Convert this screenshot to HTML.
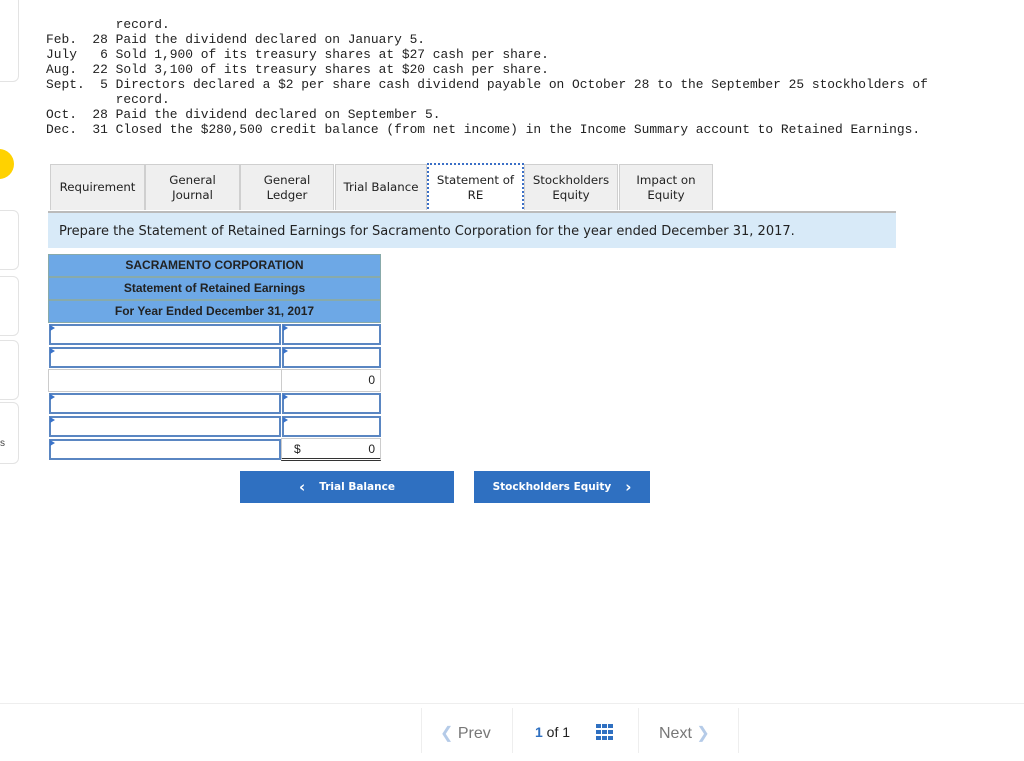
<!DOCTYPE html>
<html><head><style>
body{margin:0;width:1024px;height:761px;background:#fff;font-family:"Liberation Sans",sans-serif;position:relative;overflow:hidden;color:#222}
.card{position:absolute;left:-10px;width:27px;border:1px solid #e3e3e3;border-radius:6px;background:#fff}
pre{position:absolute;left:46px;top:17px;margin:0;font-family:"Liberation Mono",monospace;font-size:12.9px;line-height:15px;color:#222}
.clip{position:absolute;left:0;top:0;width:1024px;height:18px;background:#fff}
.tab{position:absolute;top:164px;height:45px;background:#efefef;border:1px solid #cfcfcf;border-bottom:none;font-family:"DejaVu Sans",sans-serif;font-size:11.8px;display:flex;align-items:center;justify-content:center;text-align:center;line-height:15px;color:#222}
.tab.act{background:#fff;border:2px dotted #3b6fc6;top:163px;height:46px}
.strip{position:absolute;left:48px;top:211px;width:848px;height:37px;background:#d8eaf8;border-top:2px solid #bbb;box-sizing:border-box;font-family:"DejaVu Sans",sans-serif;font-size:13px;padding:11px 0 0 11px;color:#222}
.hdr{position:absolute;left:48px;width:333px;height:23px;background:#6da8e6;border:1px solid #8aa;box-sizing:border-box;font-size:12px;font-weight:bold;text-align:center;line-height:21px;color:#222}
.in{position:absolute;height:21px;background:#fff;border:2px solid #5a86c2;box-sizing:border-box}
.in:before{content:"";position:absolute;left:-1px;top:-1px;border-left:5px solid #3a73c9;border-top:3px solid transparent;border-bottom:3px solid transparent}
.plain{position:absolute;height:23px;border:1px solid #ccc;box-sizing:border-box;font-size:12px;text-align:right;padding-right:5px;line-height:21px}
.btn{position:absolute;top:471px;height:32px;background:#2f70c1;color:#fff;font-family:"DejaVu Sans",sans-serif;font-size:10.5px;font-weight:bold;display:flex;align-items:center;justify-content:center}
</style></head><body>
<div class="card" style="top:-5px;height:85px"></div>
<div class="card" style="top:210px;height:58px"></div>
<div class="card" style="top:276px;height:58px"></div>
<div class="card" style="top:340px;height:58px"></div>
<div class="card" style="top:402px;height:60px"></div>
<div style="position:absolute;left:-16px;top:149px;width:30px;height:30px;border-radius:50%;background:#ffd200"></div>
<div style="position:absolute;left:0;top:438px;font-size:10px;color:#444">s</div>
<pre>         record.
Feb.  28 Paid the dividend declared on January 5.
July   6 Sold 1,900 of its treasury shares at $27 cash per share.
Aug.  22 Sold 3,100 of its treasury shares at $20 cash per share.
Sept.  5 Directors declared a $2 per share cash dividend payable on October 28 to the September 25 stockholders of
         record.
Oct.  28 Paid the dividend declared on September 5.
Dec.  31 Closed the $280,500 credit balance (from net income) in the Income Summary account to Retained Earnings.</pre>
<div class="clip" style="left:20px;width:1004px;height:19px"></div>
<div class="tab" style="left:50px;width:93px">Requirement</div>
<div class="tab" style="left:145px;width:93px">General<br>Journal</div>
<div class="tab" style="left:240px;width:92px">General<br>Ledger</div>
<div class="tab" style="left:335px;width:90px">Trial Balance</div>
<div class="tab act" style="left:427px;width:93px">Statement of<br>RE</div>
<div class="tab" style="left:524px;width:92px">Stockholders<br>Equity</div>
<div class="tab" style="left:619px;width:92px">Impact on<br>Equity</div>
<div class="strip">Prepare the Statement of Retained Earnings for Sacramento Corporation for the year ended December 31, 2017.</div>
<div class="hdr" style="top:254px">SACRAMENTO CORPORATION</div>
<div class="hdr" style="top:277px">Statement of Retained Earnings</div>
<div class="hdr" style="top:300px">For Year Ended December 31, 2017</div>
<div class="in" style="left:49px;top:324px;width:232px"></div><div class="in" style="left:282px;top:324px;width:99px"></div>
<div class="in" style="left:49px;top:347px;width:232px"></div><div class="in" style="left:282px;top:347px;width:99px"></div>
<div class="plain" style="left:48px;top:369px;width:234px"></div><div class="plain" style="left:281px;top:369px;width:100px">0</div>
<div class="in" style="left:49px;top:393px;width:232px"></div><div class="in" style="left:282px;top:393px;width:99px"></div>
<div class="in" style="left:49px;top:416px;width:232px"></div><div class="in" style="left:282px;top:416px;width:99px"></div>
<div class="in" style="left:49px;top:439px;width:232px"></div>
<div class="plain" style="left:281px;top:438px;width:100px;border-bottom:3px double #333"><span style="position:absolute;left:12px">$</span>0</div>
<div class="btn" style="left:240px;width:214px"><span style="font-size:15px;margin-right:14px">&#8249;</span>Trial Balance</div>
<div class="btn" style="left:474px;width:176px">Stockholders Equity<span style="font-size:15px;margin-left:14px">&#8250;</span></div>
<div style="position:absolute;left:0;top:703px;width:1024px;border-top:1px solid #eee"></div>
<div style="position:absolute;left:421px;top:708px;width:316px;height:45px;border-left:1px solid #eee;border-right:1px solid #eee"></div>
<div style="position:absolute;left:512px;top:708px;height:45px;border-left:1px solid #eee"></div>
<div style="position:absolute;left:638px;top:708px;height:45px;border-left:1px solid #eee"></div>
<div style="position:absolute;left:440px;top:723px;font-size:16px;color:#777"><span style="color:#b5cbe8">&#10094;</span> Prev</div>
<div style="position:absolute;left:535px;top:724px;font-size:14px"><b style="color:#2f70c1">1</b> of 1</div>
<svg style="position:absolute;left:596px;top:724px" width="18" height="16"><g fill="#2f70c1"><rect x="0" y="0" width="5" height="4"/><rect x="6" y="0" width="5" height="4"/><rect x="12" y="0" width="5" height="4"/><rect x="0" y="6" width="5" height="4"/><rect x="6" y="6" width="5" height="4"/><rect x="12" y="6" width="5" height="4"/><rect x="0" y="12" width="5" height="4"/><rect x="6" y="12" width="5" height="4"/><rect x="12" y="12" width="5" height="4"/></g></svg>
<div style="position:absolute;left:659px;top:723px;font-size:16px;color:#777">Next <span style="color:#b5cbe8">&#10095;</span></div>
</body></html>
